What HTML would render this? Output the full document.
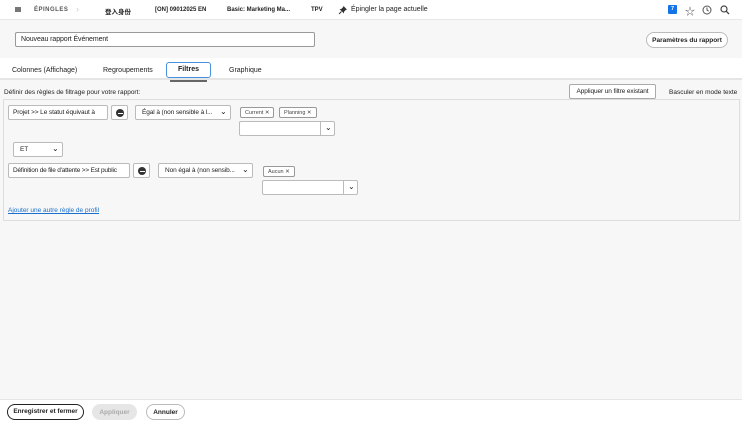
<!DOCTYPE html><html><head><meta charset="utf-8"><style>
*{box-sizing:border-box;margin:0;padding:0}
body{width:750px;height:423px;position:relative;background:#fff;font-family:"Liberation Sans","Noto Sans CJK SC",sans-serif;font-size:7px;color:#222;overflow:hidden;white-space:nowrap}
.a{position:absolute}
.main{left:0;top:20px;width:742px;height:380px;background:#f7f7f7}
.box{border:1px solid #bbb;background:#fff;border-radius:2px;overflow:hidden;line-height:14px;font-size:6.5px;letter-spacing:-.1px}
.btnr{border:1px solid #bbb;background:#fff;border-radius:10px;font-weight:bold;text-align:center}
.chip{border:1px solid #999;border-radius:2px;background:#fff;font-size:5.5px;padding:0 4px;line-height:10px;height:11px;color:#444}
.arr{position:absolute;top:0;font-size:8px;line-height:12px}
.min{position:absolute;left:4px;top:3px;width:8px;height:8px;border-radius:50%;background:#333}
.min:after{content:"";position:absolute;left:1.5px;top:3.5px;width:5px;height:1px;background:#fff}
</style></head><body>
<div class="a" style="left:0;top:0;width:742px;height:20px;background:#fff;border-bottom:1px solid #e8e8e8"></div>
<div class="a" style="left:15px;top:7px;width:6px;height:5px;background:#777"></div>
<div class="a" style="left:34px;top:7px;font-size:6px;font-weight:bold;letter-spacing:.5px;color:#555">ÉPINGLES</div>
<div class="a" style="left:76px;top:4px;color:#ccc;font-size:9px">›</div>
<div class="a" style="left:105px;top:6px;font-size:6.5px;font-weight:bold">登入身份</div>
<div class="a" style="left:155px;top:7px;font-size:6px;font-weight:bold">[ON] 09012025 EN</div>
<div class="a" style="left:227px;top:7px;font-size:6px;font-weight:bold">Basic: Marketing Ma...</div>
<div class="a" style="left:311px;top:7px;font-size:6px;font-weight:bold">TPV</div>
<svg class="a" style="left:338px;top:5px" width="10" height="10" viewBox="0 0 10 10"><path d="M5.5 1L9 4.5 7.8 5 6 6.8 6 8.5 1.5 4 3.2 4 5 2.2z" fill="#333"/><path d="M3.5 6.5L1 9" stroke="#333" stroke-width="1"/></svg>
<div class="a" style="left:351px;top:6px;font-size:7px">Épingler la page actuelle</div>
<div class="a" style="left:668px;top:5px;width:9px;height:9px;background:#1473e6;color:#fff;font-size:5.5px;text-align:center;line-height:9px;font-weight:bold;border-radius:1px">7</div>
<div class="a" style="left:685px;top:3px;font-size:10px;color:#555">☆</div>
<svg class="a" style="left:702px;top:5px" width="10" height="10" viewBox="0 0 10 10"><circle cx="5" cy="5" r="4" fill="none" stroke="#555" stroke-width="1"/><path d="M5 2.5V5l1.6 1.2" stroke="#555" fill="none"/></svg>
<svg class="a" style="left:720px;top:5px" width="10" height="10" viewBox="0 0 10 10"><circle cx="4" cy="4" r="3" fill="none" stroke="#444" stroke-width="1.2"/><path d="M6.2 6.2L9 9" stroke="#444" stroke-width="1.3"/></svg>
<div class="main a"></div>
<div class="a box" style="left:15px;top:32px;width:300px;height:15px;border-color:#999;padding:0 5px;font-size:7px">Nouveau rapport Événement</div>
<div class="a btnr" style="left:646px;top:32px;width:82px;height:16px;line-height:15px;font-size:6.5px">Paramètres du rapport</div>
<div class="a" style="left:0;top:58px;width:742px;height:22px;background:#fff;border-bottom:2px solid #e5e5e5"></div>
<div class="a" style="left:12px;top:67px">Colonnes (Affichage)</div>
<div class="a" style="left:103px;top:67px">Regroupements</div>
<div class="a" style="left:166px;top:62px;width:45px;height:16px;border:1.5px solid #4a90e2;border-radius:3px;background:#fff;text-align:center;line-height:14px;font-weight:bold">Filtres</div>
<div class="a" style="left:170px;top:80px;width:37px;height:2px;background:#666"></div>
<div class="a" style="left:229px;top:67px">Graphique</div>
<div class="a" style="left:4px;top:89px;font-size:6.5px">Définir des règles de filtrage pour votre rapport:</div>
<div class="a box" style="left:569px;top:84px;width:87px;height:15px;text-align:center;border-color:#aaa">Appliquer un filtre existant</div>
<div class="a" style="left:669px;top:89px;font-size:6.5px">Basculer en mode texte</div>
<div class="a" style="left:3px;top:99px;width:737px;height:122px;border:1px solid #ddd"></div>
<div class="a box" style="left:8px;top:105px;width:100px;height:15px;padding:0 4px">Projet &gt;&gt; Le statut équivaut à</div>
<div class="a box" style="left:111px;top:105px;width:17px;height:15px"><div class="min"></div></div>
<div class="a box" style="left:135px;top:105px;width:96px;height:15px;padding:0 6px">Égal à (non sensible à l...<span class="arr" style="left:84px">⌄</span></div>
<div class="a chip" style="left:240px;top:107px">Current ✕</div>
<div class="a chip" style="left:279px;top:107px">Planning ✕</div>
<div class="a box" style="left:239px;top:121px;width:96px;height:15px"><div class="a" style="left:80px;top:0;width:1px;height:13px;background:#bbb"></div><div class="arr" style="left:85px">⌄</div></div>
<div class="a box" style="left:13px;top:142px;width:50px;height:15px;padding:0 6px">ET<span class="arr" style="left:38px">⌄</span></div>
<div class="a box" style="left:8px;top:163px;width:122px;height:15px;padding:0 4px;letter-spacing:-.2px">Définition de file d'attente &gt;&gt; Est public</div>
<div class="a box" style="left:133px;top:163px;width:17px;height:15px"><div class="min"></div></div>
<div class="a box" style="left:158px;top:163px;width:95px;height:15px;padding:0 6px">Non égal à (non sensib...<span class="arr" style="left:83px">⌄</span></div>
<div class="a chip" style="left:263px;top:166px">Aucun ✕</div>
<div class="a box" style="left:262px;top:180px;width:96px;height:15px"><div class="a" style="left:80px;top:0;width:1px;height:13px;background:#bbb"></div><div class="arr" style="left:85px">⌄</div></div>
<div class="a" style="left:8px;top:207px;color:#1a6fcf;text-decoration:underline;font-size:6.5px">Ajouter une autre règle de profil</div>
<div class="a" style="left:0;top:399px;width:742px;height:24px;background:#fff;border-top:1px solid #e5e5e5"></div>
<div class="a btnr" style="left:7px;top:404px;width:77px;height:16px;line-height:14px;border:1.5px solid #222;font-size:6.5px">Enregistrer et fermer</div>
<div class="a btnr" style="left:92px;top:404px;width:45px;height:16px;line-height:15px;background:#e6e6e6;border-color:#e6e6e6;color:#aaa;font-size:6.5px">Appliquer</div>
<div class="a btnr" style="left:146px;top:404px;width:39px;height:16px;line-height:15px;font-size:6.5px">Annuler</div>
</body></html>
